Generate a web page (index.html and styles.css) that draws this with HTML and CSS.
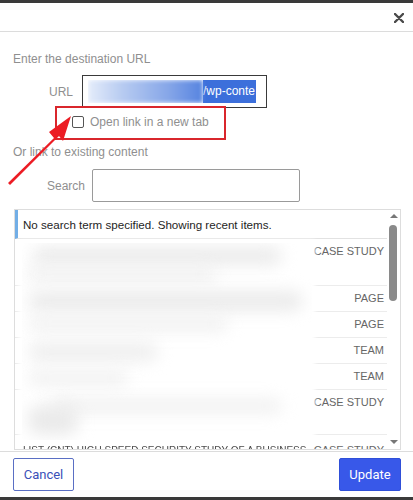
FILE: index.html
```html
<!DOCTYPE html>
<html>
<head>
<meta charset="utf-8">
<link rel="stylesheet" href="styles.css">
</head>
<body>
<div class="frame">
  <div class="edge"></div>
  <div class="header">
    <button class="close" aria-label="Close">
      <svg width="10" height="10" viewBox="0 0 10 10"><path d="M1 1L9 9M9 1L1 9" stroke="#4a4a4a" stroke-width="2.4" stroke-linecap="round"/></svg>
    </button>
  </div>
  <div class="content">
    <p class="hint first">Enter the destination URL</p>
    <div class="field url-field">
      <label class="lbl">URL</label>
      <div class="url-input"><span class="sel"><span class="sel-blur"></span><span class="sel-text">/wp-conte</span></span></div>
    </div>
    <div class="check-row">
      <span class="checkbox"></span>
      <span class="check-text">Open link in a new tab</span>
    </div>
    <p class="hint second">Or link to existing content</p>
    <div class="field search-field">
      <label class="lbl">Search</label>
      <div class="search-input"></div>
    </div>
    <div class="results">
      <div class="list">
        <div class="notice">No search term specified. Showing recent items.</div>
        <div class="row tall"><span class="type">Case Study</span></div>
        <div class="row"><span class="type">Page</span></div>
        <div class="row"><span class="type">Page</span></div>
        <div class="row"><span class="type">Team</span></div>
        <div class="row"><span class="type">Team</span></div>
        <div class="row tall2"><span class="type">Case Study</span></div>
        <div class="row last"><span class="title-cut">LIST (CNT) HIGH SPEED SECURITY STUDY OF A BUSINESS</span><span class="type">Case Study</span></div>
        <div class="redact">
          <span class="blob b1"></span><span class="blob b2"></span><span class="blob b3"></span>
          <span class="blob b4"></span><span class="blob b5"></span><span class="blob b6"></span>
          <span class="blob b7"></span><span class="blob b8"></span>
        </div>
      </div>
      <div class="scrollbar">
        <span class="arrow up"></span>
        <span class="thumb"></span>
        <span class="arrow down"></span>
      </div>
    </div>
  </div>
  <div class="footer">
    <button class="btn cancel">Cancel</button>
    <button class="btn update">Update</button>
  </div>
  <div class="edge bottom"></div>

  <div class="highlight"></div>
  <svg class="pointer" width="80" height="80" viewBox="0 0 80 80">
    <polygon points="0,76 46,31 41,25 63,9 55,34 51,29 2,78" fill="#ec1c24"/>
  </svg>
</div>
</body>
</html>
```
FILE: styles.css
```css
* { box-sizing: border-box; }
html, body { margin: 0; padding: 0; background: #fff; }
body {
  font-family: "Liberation Sans", Arial, sans-serif;
  font-size: 12px;
  color: #1e1e1e;
}
.frame {
  position: relative;
  width: 413px;
  height: 500px;
  overflow: hidden;
  display: flex;
  flex-direction: column;
}
.edge { height: 3px; background: #3a3a3a; flex: none; }
.edge.bottom { margin-top: auto; }
.header {
  height: 29px;
  border-bottom: 1px solid #dcdcdc;
  display: flex;
  justify-content: flex-end;
  align-items: center;
  padding-right: 9px;
  flex: none;
}
.close {
  border: 0; background: none; padding: 0; width: 10px; height: 10px;
  display: flex; margin-top: 1px;
}
.content { padding: 0 12px 0 13px; flex: none; }
.hint { margin: 0; color: #8f8f8f; font-size: 12px; line-height: 14px; }
.hint.first { margin-top: 20px; }
.field { display: flex; align-items: center; }
.lbl { color: #8f8f8f; font-size: 12px; text-align: right; flex: none; }
.url-field { margin-top: 9px; height: 33px; }
.url-field .lbl { width: 69px; padding-right: 9px; }
.url-input {
  flex: none;
  width: 185px; height: 33px; border: 1px solid #3a3a3a;
  padding: 4px 10px 5px 5px; display: flex;
}
.sel { flex: 1; display: flex; height: 23px; overflow: hidden; }
.sel-blur {
  flex: 1;
  background: linear-gradient(90deg, #e4ecfa 0%, #b7cbf1 30%, #86a6e8 70%, #5684e0 100%);
  filter: blur(2px);
}
.sel-text {
  background: #3c6fdb; color: #fff; font-size: 12px; line-height: 23px;
  padding-right: 1px;
}
.check-row { display: flex; align-items: center; margin-top: 7px; padding-left: 59px; height: 13px; }
.checkbox {
  width: 12px; height: 12px; border: 1px solid #555; border-radius: 2px; background: #fff;
}
.check-text { margin-left: 6px; color: #8f8f8f; font-size: 12px; }
.hint.second { margin-top: 17px; }
.search-field { margin-top: 10px; height: 33px; }
.search-field .lbl { width: 72px; padding-right: 0; }
.search-input {
  flex: none;
  margin-left: 7px; width: 208px; height: 33px; border: 1px solid #9a9a9a; border-radius: 2px;
}
.results {
  margin-top: 7px; margin-left: 1px;
  width: 387px; height: 241px;
  border: 1px solid #dddddd;
  display: flex;
  overflow: hidden;
}
.list { position: relative; flex: 1; overflow: hidden; }
.notice {
  border-left: 3px solid #72aee6;
  padding-left: 5px;
  height: 29px;
  line-height: 29px;
  font-size: 11.6px;
  color: #1e1e1e;
  border-bottom: 1px solid #e2e2e2;
}
.row {
  height: 26px;
  border-bottom: 1px solid #ececec;
  display: flex;
  justify-content: flex-end;
  align-items: flex-start;
  padding: 6px 3px 0 8px;
}
.row.tall { height: 47px; }
.row.tall2 { height: 45px; }
.row.last { border-bottom: 0; padding-top: 9px; justify-content: space-between; }
.type {
  text-transform: uppercase; color: #666; font-size: 11px; line-height: 13px;
  white-space: nowrap;
}
.title-cut {
  color: #444; font-size: 10px; line-height: 13px; white-space: nowrap;
  filter: blur(0.7px);
}
.redact {
  position: absolute;
  left: 7px; top: 33px;
  width: 290px; height: 197px;
  background: #fff;
  box-shadow: 0 0 4px 3px #fff;
  overflow: hidden;
}
.blob { position: absolute; background: #ebebeb; border-radius: 12px; filter: blur(8px); }
.b1 { left: 10px; top: 4px; width: 250px; height: 18px; }
.b2 { left: 4px; top: 24px; width: 190px; height: 14px; background: #f0f0f0; }
.b3 { left: 6px; top: 48px; width: 275px; height: 20px; }
.b4 { left: 6px; top: 74px; width: 200px; height: 14px; background: #f0f0f0; }
.b5 { left: 6px; top: 100px; width: 130px; height: 18px; background: #eeeeee; }
.b6 { left: 6px; top: 128px; width: 100px; height: 14px; background: #f0f0f0; }
.b7 { left: 30px; top: 156px; width: 230px; height: 14px; background: #f0f0f0; }
.b8 { left: 6px; top: 162px; width: 50px; height: 30px; background: #eaeaea; }
.scrollbar {
  width: 13px; flex: none; position: relative; background: #fff;
}
.arrow { position: absolute; left: 3px; width: 0; height: 0; border-left: 4px solid transparent; border-right: 4px solid transparent; }
.arrow.up { top: 4px; border-bottom: 4px solid #777; }
.arrow.down { bottom: 5px; border-top: 4px solid #777; }
.thumb {
  position: absolute; left: 2px; top: 15px; width: 8px; height: 76px;
  background: #8a8a8a; border-radius: 4px;
}
.footer {
  margin-top: 1px;
  border-top: 1px solid #dcdcdc;
  padding: 6px 12px 0 13px;
  display: flex;
  justify-content: space-between;
  flex: none;
}
.btn {
  height: 33px; font-family: "Roboto", "Liberation Sans", sans-serif; font-size: 13px;
  border-radius: 2px; cursor: pointer;
}
.cancel { width: 61px; background: #fff; border: 1px solid #5a6fc4; color: #3a50b8; }
.update { width: 62px; background: #3858e9; border: 1px solid #2f4fd8; color: #fff; }
.highlight {
  position: absolute; left: 55px; top: 106px; width: 171px; height: 34px;
  border: 2px solid #d9262c;
}
.pointer { position: absolute; left: 8px; top: 107px; }
```
